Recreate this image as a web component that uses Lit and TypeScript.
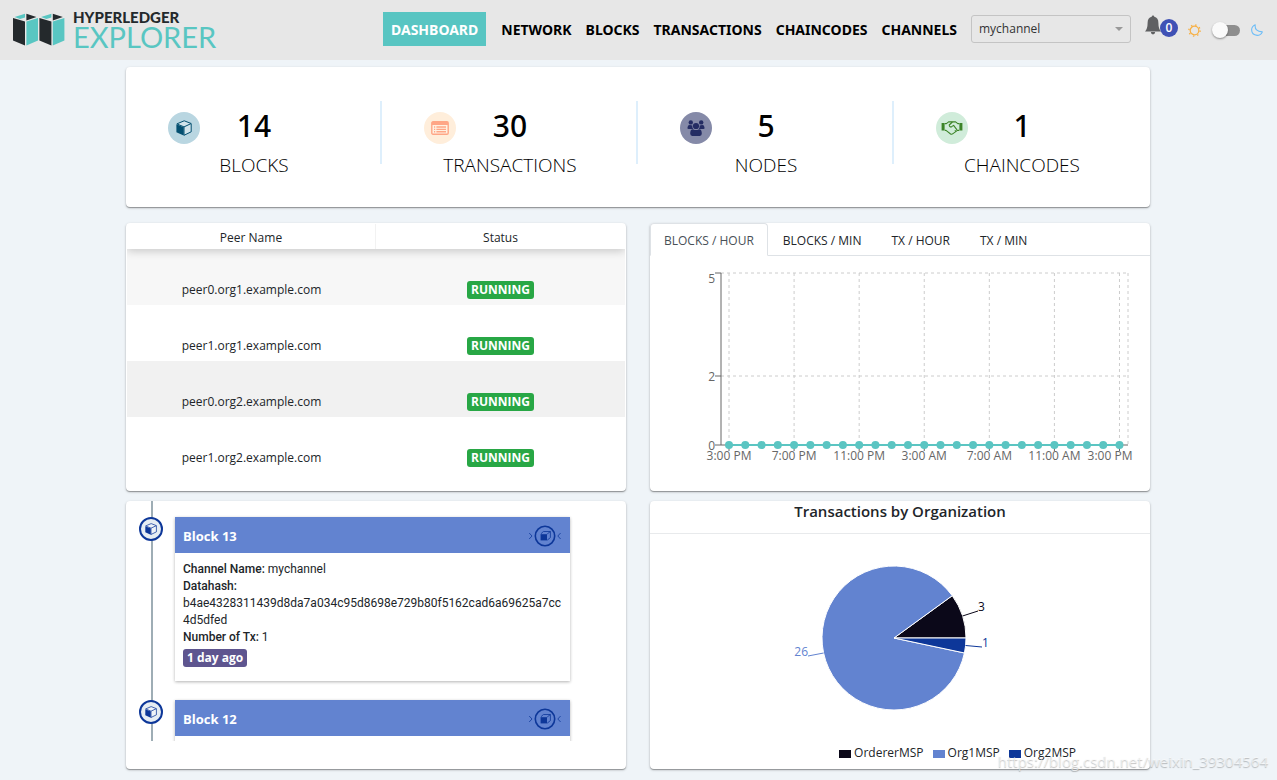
import { LitElement, html, svg, css } from "lit";
import { customElement, state } from "lit/decorators.js";

const FONT = css`"Open Sans", "Noto Sans", sans-serif`;

const cubeIcon = (size: number) => html`
  <svg width=${size} height=${size} viewBox="0 0 16 16" aria-hidden="true">
    <path d="M0.4 4.2 L7.7 7.2 V15.6 L0.4 12.2 Z" fill="currentColor" />
    <path d="M0.9 3.9 L8.2 0.8 L15.2 3.5 L8 6.9 Z M15.2 3.8 V11.8 L8 15.3 V7"
      fill="rgba(255,255,255,.35)" stroke="currentColor" stroke-width="1" stroke-linejoin="round" />
  </svg>`;

const listIcon = html`
  <svg width="18" height="14" viewBox="0 0 18 14" aria-hidden="true">
    <rect x="0.8" y="0.8" width="16.4" height="12.4" rx="1.2" fill="#fff" fill-opacity=".2" stroke="#ffa686" stroke-width="1.4" />
    <path d="M1 1H17V4H1Z" fill="#ffa686" />
    <path d="M5.4 6H15 M5.4 8.4H15 M5.4 10.8H15 M3 6H4.2 M3 8.4H4.2 M3 10.8H4.2" stroke="#ffa686" stroke-width="1.4" />
  </svg>`;

const usersIcon = html`
  <svg width="18" height="16" viewBox="0 0 18 16" fill="#242c63" aria-hidden="true">
    <circle cx="3.8" cy="2.4" r="2.2" /><circle cx="14.2" cy="2.4" r="2.2" />
    <path d="M0.5 8.6 V7.4 Q0.7 4.8 3 5 L5.3 5.6 Q5 7.6 6.2 9 H1.6 Q0.5 9 0.5 8.6 Z" />
    <path d="M17.5 8.6 V7.4 Q17.3 4.8 15 5 L12.7 5.6 Q13 7.6 11.8 9 H16.4 Q17.5 9 17.5 8.6 Z" />
    <circle cx="9" cy="6" r="3.1" />
    <path d="M3.2 13.6 Q3.2 9.2 6 9.2 Q9 11 12 9.2 Q14.8 9.2 14.8 13.6 Q14.8 16 12.8 16 H5.2 Q3.2 16 3.2 13.6 Z" />
  </svg>`;

const handshakeIcon = html`
  <svg width="22" height="14" viewBox="0 0 22 14" fill="none" stroke="#3c8428" stroke-width="1.1" stroke-linejoin="round" aria-hidden="true">
    <path d="M0.6 2H3.6V9.6H0.6Z M18.4 2H21.4V9.6H18.4Z" fill="#3c8428" stroke="none" />
    <path d="M3.8 2.6 H5.4 L7.6 0.9 H14.6 L16.8 2.6 H18.2 M3.8 9.4 H5 L9.6 13 Q10.8 13.6 12 12.6 L16.4 9.4 H18.2" />
    <path d="M11.4 1 L8.2 4 Q8.6 6.8 11 5.4 L12.6 4.4 L16 8.8 M13.8 9.4 L15 10.4" />
  </svg>`;

const bellIcon = html`
  <svg width="16" height="20" viewBox="0 0 16 20" fill="#5f6062" aria-hidden="true">
    <path d="M8 0.4 Q9.3 0.4 9.3 1.8 Q13.4 2.8 13.4 8 Q13.4 14 16 16.4 H0 Q2.6 14 2.6 8 Q2.6 2.8 6.7 1.8 Q6.7 0.4 8 0.4 Z" />
    <path d="M5.8 17 H10.2 Q10 19.4 8 19.4 Q6 19.4 5.8 17 Z" />
  </svg>`;

const sunIcon = html`
  <svg width="13" height="13" viewBox="0 0 13 13" fill="none" stroke="#f7b045" aria-hidden="true">
    <circle cx="6.5" cy="6.5" r="4.3" stroke-width="1.2" />
    <circle cx="6.5" cy="6.5" r="5.6" stroke-width="1.4" stroke-dasharray="1.4 3" />
  </svg>`;

const moonIcon = html`
  <svg width="12" height="12" viewBox="0 0 12 12" fill="none" stroke="#6dbdf7" stroke-width="1.1" stroke-linejoin="round" aria-hidden="true">
    <path d="M4.2 0.7 Q3.4 7.6 11.3 7.9 Q9.6 11.4 6.2 11.4 Q0.7 11 0.6 5.8 Q0.8 2.2 4.2 0.7 Z" />
  </svg>`;

const blockFindIcon = html`
  <svg width="34" height="22" viewBox="0 0 34 22" fill="none" stroke="#0d3799" aria-hidden="true">
    <circle cx="17" cy="11" r="9.7" stroke-width="1.6" />
    <path d="M1.2 8 L4 11 L1.2 14 M32.6 8 L29.8 11 L32.6 14" stroke-width=".8" />
    <path d="M12.6 9.2 H19 V15.4 H12.6 Z" fill="#0d3799" stroke="none" />
    <path d="M12.9 8.8 L15.4 6.5 H22.4 L19.2 9 M22.4 6.5 V12.6 L19.2 15.2" stroke-width=".8" />
  </svg>`;

const logoMark = html`
  <svg width="52" height="33" viewBox="0 0 52 33" aria-hidden="true">
    ${[0, 26.4].map(
      (dx) => svg`<g transform="translate(${dx} 0)">
        <path d="M0 5 L12 8.6 V32.4 L0 27.6 Z" fill="#24292c" />
        <path d="M13.4 8.6 L25 5 V27.6 L13.4 32.4 Z" fill="#59c6c2" />
        <path d="M1.6 4 L12 0.8 V4.4 L7 6 Z" fill="#59c6c2" />
        <path d="M13.4 0.8 L23.4 4 L13.4 7.4 Z" fill="#24292c" />
      </g>`
    )}
  </svg>`;

@customElement("app-root")
export class AppRoot extends LitElement {
  static styles = css`
    :host {
      display: block;
      position: relative;
      box-sizing: border-box;
      min-height: 100vh;
      background: #eff4f8;
      color: #212529;
      font: 12px/20px ${FONT};
    }
    * { box-sizing: border-box; }
    button, select { font: inherit; color: inherit; border: 0; background: none; margin: 0; padding: 0; }
    svg { display: block; }

    header {
      display: flex;
      align-items: center;
      height: 60px;
      padding: 0 14px 2px 13px;
      background: #e7e7e7;
    }
    .logo { display: flex; align-items: center; gap: 8px; text-decoration: none; }
    .words { display: grid; padding-top: 1px; font-family: Lato, sans-serif; }
    .hyper { font-weight: 900; font-size: 15px; line-height: 14px; color: #24292c; }
    .explorer { font-weight: 400; font-size: 29px; line-height: 26px; color: #59c6c2; }
    nav { display: flex; margin-left: auto; margin-right: 7px; }
    nav a {
      padding: 1px 7px 0;
      line-height: 33px;
      font-family: "Noto Sans", sans-serif;
      font-size: 14px;
      font-weight: 700;
      color: #000;
      text-decoration: none;
    }
    nav a.active { background: #58c5c2; color: #fff; padding: 1px 8px 0; margin-right: 8px; }
    .channel { display: grid; align-items: center; width: 160px; }
    .channel > * { grid-area: 1 / 1; }
    .channel select {
      appearance: none;
      height: 28px;
      padding: 0 7px;
      border: 1px solid #c4c4c4;
      border-radius: 3px;
      color: #333;
    }
    .caret {
      justify-self: end;
      margin-right: 8px;
      border: 4px solid transparent;
      border-top-color: #999;
      border-bottom: 0;
      pointer-events: none;
    }
    .bell { display: flex; margin-left: 14px; align-self: start; padding-top: 15px; }
    .count {
      width: 18px;
      height: 18px;
      margin: 4px 0 0 -1px;
      border-radius: 50%;
      background: #3f51b5;
      color: #fff;
      font-size: 12px;
      font-weight: 600;
      line-height: 18px;
    }
    .theme { display: flex; align-items: center; gap: 11px; margin-left: 10px; padding-top: 2px; }
    .switch { appearance: none; display: grid; align-items: center; width: 28px; height: 16px; margin: 0; }
    .switch::before, .switch::after { content: ""; grid-area: 1 / 1; }
    .switch::before { justify-self: end; width: 22px; height: 11px; border-radius: 6px; background: #8e8e8e; }
    .switch::after {
      width: 16px;
      height: 16px;
      border-radius: 50%;
      background: #fafafa;
      box-shadow: 0 1px 2px rgba(0, 0, 0, .4);
    }

    main {
      display: grid;
      grid-template-columns: 1fr 1fr;
      gap: 10px 24px;
      max-width: 1025px;
      margin: 0 auto;
      padding: 7px 1px 11px 0;
    }
    .card {
      min-width: 0;
      background: #fff;
      border-radius: 4px;
      box-shadow: 0 1px 1px rgba(0, 0, 0, .3), 0 1px 3px rgba(0, 0, 0, .2);
    }
    .stats {
      grid-column: 1 / -1;
      display: grid;
      grid-template-columns: repeat(4, 1fr);
      height: 140px;
      margin-bottom: 6px;
      padding-top: 34px;
    }
    .stat {
      display: grid;
      grid-template-columns: 74px 1fr 74px;
      align-content: start;
      color: #000;
      text-align: center;
      background: linear-gradient(#deeffc, #deeffc) right top / 2px 63px no-repeat;
    }
    .stat:last-child { background: none; }
    .badge { display: grid; place-items: center; justify-self: end; width: 32px; height: 32px; margin-top: 11px; border-radius: 50%; }
    .badge.blue { background: #b9d6e1; color: #034f70; }
    .badge.orange { background: #ffeedb; }
    .badge.navy { background: #858aa8; }
    .badge.green { background: #d0ecda; }
    .num { font-family: "Noto Sans", sans-serif; font-size: 30px; line-height: 50px; font-weight: 500; }
    .label { grid-column: 1 / -1; font-size: 19px; line-height: 28px; font-weight: 300; }

    .pane { height: 268px; }
    table { width: 100%; padding: 1px 1px 0; border-spacing: 0; table-layout: fixed; text-align: center; }
    thead { position: relative; box-shadow: 0 2px 10px rgba(0, 0, 0, .2); clip-path: inset(0 0 -14px 0); }
    th { height: 25px; padding: 2px 0 0; font-weight: 400; background: #fff; }
    th:first-child { border-right: 1px solid #f2f2f2; }
    td { height: 56px; padding: 25px 0 0; }
    tr.odd { background: #f7f7f7; }
    tr.hover { background: #f1f1f1; }
    .tag {
      display: inline-block;
      padding: 0 4px;
      border-radius: 3px;
      font-size: 12px;
      font-weight: 700;
      line-height: 18px;
      color: #fff;
    }
    .tag.run { background: #28a745; }
    .tag.age { background: #5e558f; }

    .tabs { display: flex; height: 33px; border-bottom: 1px solid #dee2e6; }
    .tabs button { height: 33px; padding: 2px 14px 0; border: 1px solid transparent; }
    .tabs button.on {
      background: #fff;
      color: #495057;
      padding: 2px 13px 0;
      border-color: #dee2e6 #dee2e6 #fff;
      border-radius: 4px 4px 0 0;
    }
    .plot { width: 100%; }

    .scroll {
      height: 240px;
      overflow: hidden;
      padding: 16px 56px 0 13px;
      background: linear-gradient(#9eadb5, #9eadb5) 25px 0 / 2px 100% no-repeat;
    }
    .event { display: flex; gap: 12px; margin-bottom: 19px; }
    .dot {
      flex: none;
      display: grid;
      place-items: center;
      width: 24px;
      height: 24px;
      border: 2px solid #0d3799;
      border-radius: 50%;
      background: #e6edf3;
      color: #0d3799;
    }
    .block { flex: 1; min-width: 0; background: #fff; box-shadow: 0 1px 3px rgba(0, 0, 0, .3); }
    .block h3 {
      display: flex;
      justify-content: space-between;
      align-items: center;
      height: 36px;
      margin: 0;
      padding: 2px 8px 0;
      background: #6283d0;
      color: #fff;
      font-size: 13px;
      font-weight: 700;
    }
    .info { height: 128px; padding: 8px; font: 12px/17px Roboto, sans-serif; }
    .info p { margin: 0; overflow-wrap: anywhere; }
    .info b { font-weight: 500; }
    .info .tag { margin-top: 3px; font-family: ${FONT}; }

    .org { display: flex; flex-direction: column; }
    .org h2 {
      height: 33px;
      margin: 0;
      border-bottom: 1px solid #e8eaec;
      font-size: 15px;
      font-weight: 600;
      line-height: 20px;
      text-align: center;
    }
    .legend { display: flex; justify-content: flex-end; gap: 9px; margin: 0; padding: 1px 74px 0 0; list-style: none; line-height: 18px; }
    .legend li { display: flex; align-items: center; gap: 3px; }
    .swatch { width: 12px; height: 8px; margin-top: 2px; }
    .swatch.a { background: #0b0819; }
    .swatch.b { background: #6283d0; }
    .swatch.c { background: #0d3799; }

    .mark {
      position: absolute;
      right: 9px;
      bottom: 9px;
      font-size: 15px;
      color: rgba(255, 255, 255, .6);
      text-shadow: 0 1px 1px rgba(0, 0, 0, .25);
      pointer-events: none;
    }
  `;

  @state() private tab = 0;

  private stats = [
    { tone: "blue", icon: cubeIcon(16), value: 14, label: "BLOCKS" },
    { tone: "orange", icon: listIcon, value: 30, label: "TRANSACTIONS" },
    { tone: "navy", icon: usersIcon, value: 5, label: "NODES" },
    { tone: "green", icon: handshakeIcon, value: 1, label: "CHAINCODES" },
  ];

  private blocks = [
    { n: 13, hash: "b4ae4328311439d8da7a034c95d8698e729b80f5162cad6a69625a7cc4d5dfed" },
    { n: 12, hash: "" },
  ];

  private renderHeader() {
    const items = ["DASHBOARD", "NETWORK", "BLOCKS", "TRANSACTIONS", "CHAINCODES", "CHANNELS"];
    return html`<header>
      <a class="logo" href="#">
        ${logoMark}
        <span class="words"><span class="hyper">HYPERLEDGER</span><span class="explorer">EXPLORER</span></span>
      </a>
      <nav>${items.map((t, i) => html`<a href="#" class=${i ? "" : "active"}>${t}</a>`)}</nav>
      <div class="channel">
        <select aria-label="Channel"><option>mychannel</option></select>
        <span class="caret"></span>
      </div>
      <button class="bell" aria-label="Notifications">${bellIcon}<span class="count">0</span></button>
      <label class="theme">${sunIcon}<input class="switch" type="checkbox" aria-label="Dark theme" />${moonIcon}</label>
    </header>`;
  }

  private renderLineChart() {
    const step = 16.27;
    const x0 = 79;
    const labels = ["3:00 PM", "7:00 PM", "11:00 PM", "3:00 AM", "7:00 AM", "11:00 AM", "3:00 PM"];
    const dots = Array.from({ length: 25 }, (_, i) => x0 + i * step);
    // The last label is pulled in so that it ends inside the plot.
    const labelX = (i: number) => Math.min(x0 + i * 4 * step, 460);
    return html`<svg class="plot" viewBox="0 0 500 220" role="img" aria-label="Blocks per hour">
      <g stroke="#ccc" stroke-dasharray="3 3">
        ${labels.map((_, i) => svg`<line x1=${x0 + i * 4 * step} x2=${x0 + i * 4 * step} y1="17" y2="189" />`)}
        <line x1="478" x2="478" y1="17" y2="189" />
        <line x1="71" x2="478" y1="17" y2="17" /><line x1="71" x2="478" y1="120" y2="120" />
      </g>
      <g stroke="#666">
        <line x1="71" x2="71" y1="17" y2="189" /><line x1="71" x2="478" y1="189" y2="189" />
        ${[17, 120, 189].map((y) => svg`<line x1="65" x2="71" y1=${y} y2=${y} />`)}
        ${labels.map((_, i) => svg`<line x1=${x0 + i * 4 * step} x2=${x0 + i * 4 * step} y1="189" y2="195" />`)}
      </g>
      <g fill="#666" text-anchor="end">
        <text x="65" y="27">5</text><text x="65" y="125">2</text><text x="65" y="194">0</text>
      </g>
      <g fill="#666" text-anchor="middle">
        ${labels.map((t, i) => svg`<text x=${labelX(i)} y="204">${t}</text>`)}
      </g>
      <line x1=${x0} x2=${x0 + 24 * step} y1="189" y2="189" stroke="#5bc5c2" stroke-width="2" />
      ${dots.map((x) => svg`<circle cx=${x} cy="189" r="4" fill="#5bc5c2" />`)}
    </svg>`;
  }

  private renderPie() {
    const cx = 244, cy = 104, r = 72;
    const pt = (deg: number) => {
      const a = (deg * Math.PI) / 180;
      return `${(cx + r * Math.cos(a)).toFixed(2)} ${(cy - r * Math.sin(a)).toFixed(2)}`;
    };
    const slice = (from: number, to: number, fill: string) =>
      svg`<path d="M${cx} ${cy} L${pt(from)} A${r} ${r} 0 ${to - from > 180 ? 1 : 0} 0 ${pt(to)} Z" fill=${fill} stroke="#fff" />`;
    return html`<svg class="plot" viewBox="0 0 500 209" role="img" aria-label="Transactions by organization">
      ${slice(0, 36, "#0b0819")} ${slice(36, 348, "#6283d0")} ${slice(348, 360, "#0d3799")}
      <path d="M312.5 82 L328 77" stroke="#0b0819" fill="none" />
      <path d="M315.6 111.5 L332 113" stroke="#0d3799" fill="none" />
      <path d="M173.6 119 L158 122" stroke="#6283d0" fill="none" />
      <text x="328" y="77" fill="#0b0819">3</text>
      <text x="332" y="113" fill="#0d3799">1</text>
      <text x="158" y="122" fill="#6283d0" text-anchor="end">26</text>
    </svg>`;
  }

  render() {
    const peers = ["peer0.org1", "peer1.org1", "peer0.org2", "peer1.org2"];
    const tabs = ["BLOCKS / HOUR", "BLOCKS / MIN", "TX / HOUR", "TX / MIN"];
    return html`
      ${this.renderHeader()}
      <main>
        <section class="card stats">
          ${this.stats.map(
            (s) => html`<div class="stat">
              <span class="badge ${s.tone}">${s.icon}</span>
              <span class="num">${s.value}</span>
              <span class="label">${s.label}</span>
            </div>`
          )}
        </section>
        <section class="card pane">
          <table>
            <thead><tr><th>Peer Name</th><th>Status</th></tr></thead>
            <tbody>
              ${peers.map(
                (p, i) => html`<tr class=${["odd", "", "hover", ""][i]}>
                  <td>${p}.example.com</td>
                  <td><span class="tag run">RUNNING</span></td>
                </tr>`
              )}
            </tbody>
          </table>
        </section>
        <section class="card pane">
          <div class="tabs" role="tablist">
            ${tabs.map(
              (t, i) => html`<button role="tab" class=${i === this.tab ? "on" : ""} @click=${() => (this.tab = i)}>${t}</button>`
            )}
          </div>
          ${this.renderLineChart()}
        </section>
        <section class="card pane">
          <div class="scroll">
            ${this.blocks.map(
              (b) => html`<article class="event">
                <span class="dot">${cubeIcon(12)}</span>
                <div class="block">
                  <h3>Block ${b.n} ${blockFindIcon}</h3>
                  <div class="info">
                    ${b.hash
                      ? html`<p><b>Channel Name:</b> mychannel</p>
                          <p><b>Datahash:</b><br />${b.hash}</p>
                          <p><b>Number of Tx:</b> 1</p>
                          <span class="tag age">1 day ago</span>`
                      : ""}
                  </div>
                </div>
              </article>`
            )}
          </div>
        </section>
        <section class="card pane org">
          <h2>Transactions by Organization</h2>
          ${this.renderPie()}
          <ul class="legend">
            <li><span class="swatch a"></span>OrdererMSP</li>
            <li><span class="swatch b"></span>Org1MSP</li>
            <li><span class="swatch c"></span>Org2MSP</li>
          </ul>
        </section>
      </main>
      <span class="mark">https://blog.csdn.net/weixin_39304564</span>
    `;
  }
}
